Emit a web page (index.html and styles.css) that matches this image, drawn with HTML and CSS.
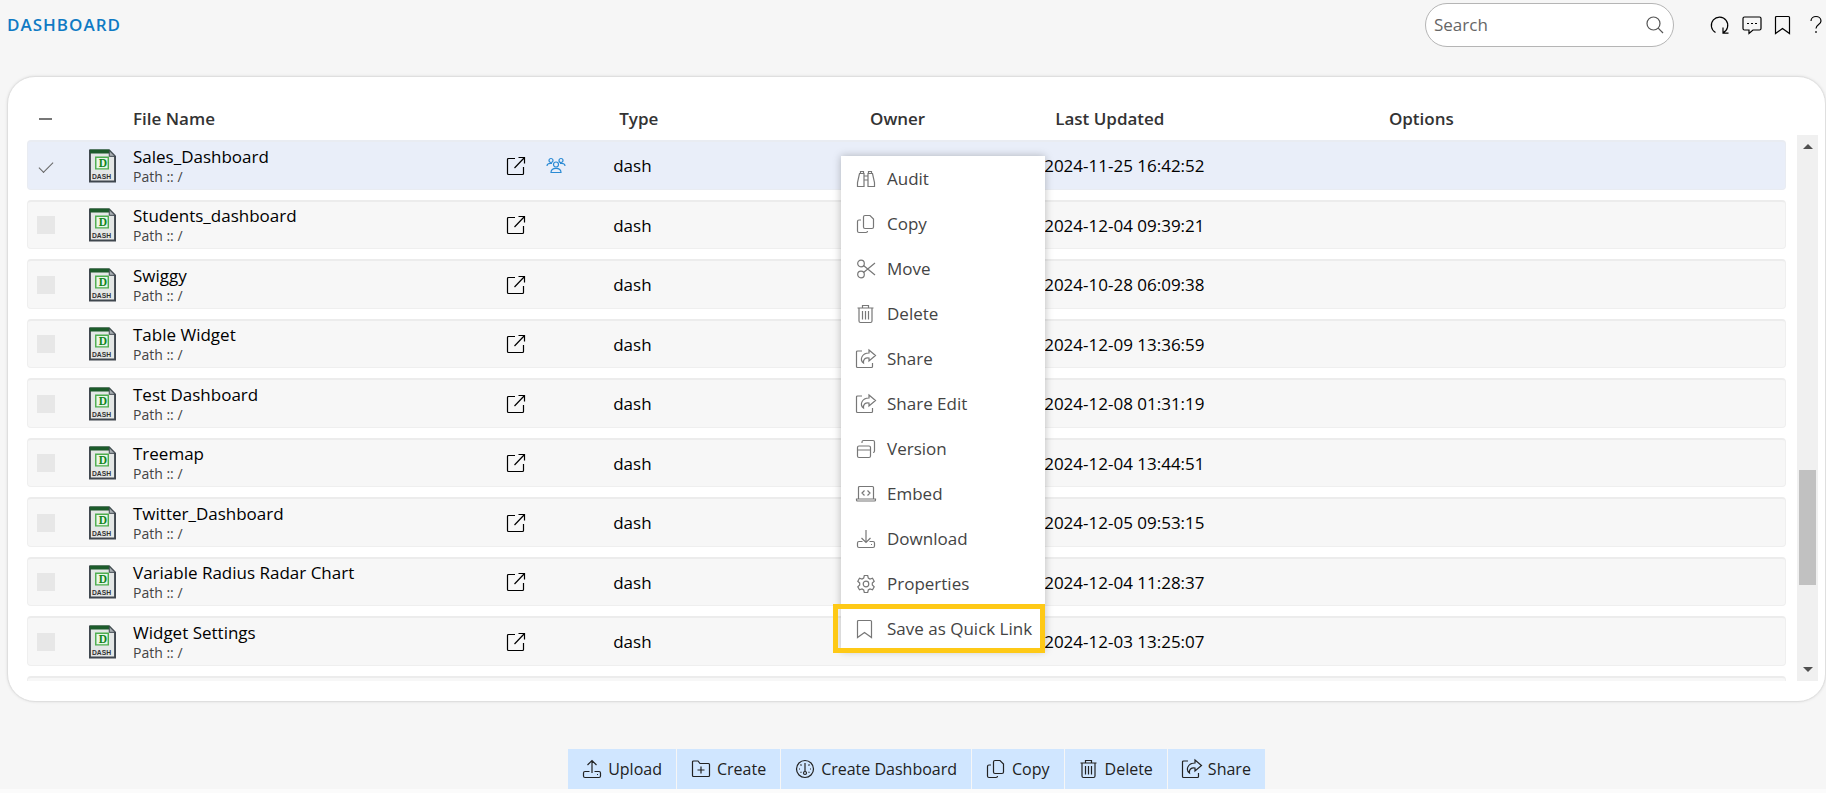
FILE: index.html
```
<!DOCTYPE html>
<html lang="en">
<head>
    <meta charset="UTF-8">
    <title>Dashboard</title>
    <link rel="stylesheet" href="styles.css">
</head>
<body>
<!-- Icon sprite -->
<svg class="sprite" aria-hidden="true">
    <symbol id="i-search" viewBox="0 0 20 20"><circle cx="8.5" cy="8.5" r="6.5"/><path d="M13.2 13.2 18 18"/></symbol>
    <symbol id="i-refresh" viewBox="0 0 20 20"><path d="M5.500 17.500A8.200 8.200 0 1 1 13 17.800M18.500 18.200H13V12.500"/></symbol>
    <symbol id="i-chat" viewBox="0 0 20 20"><path d="M2.500 2h15a1.500 1.500 0 0 1 1.500 1.500v10a1.500 1.500 0 0 1-1.500 1.500H11l-4 3.500V15H2.500A1.500 1.500 0 0 1 1 13.500v-10A1.500 1.500 0 0 1 2.500 2z"/><path d="M5 8.500h2M9 8.500h2M13 8.500h2"/></symbol>
    <symbol id="i-bookmark" viewBox="1 0 20 20"><path d="M3.500 1.500h12a1 1 0 0 1 1 1v16L9.500 13.500l-7 5v-16a1 1 0 0 1 1-1z"/></symbol>
    <symbol id="i-help" viewBox="0 0 20 20"><path d="M5 6c0-6 10-6 10 0 0 3.500-5 3.500-5 7.500M10 16v2"/></symbol>
    <symbol id="i-open" viewBox="0 0 20 20"><path d="M9 2.500H2.500a1 1 0 0 0-1 1v14a1 1 0 0 0 1 1h14a1 1 0 0 0 1-1V11M12.500 1.500h6v6M18.500 1.500 8.500 12"/></symbol>
    <symbol id="i-people" viewBox="0 0 20 20"><circle cx="5" cy="4.500" r="2"/><circle cx="15" cy="4.500" r="2"/><circle cx="10" cy="8.500" r="2.500"/><path d="M5 16.500c0-5.500 10-5.500 10 0zM1 10c0-2 2-3 5-2.500M19 10c0-2-2-3-5-2.500"/></symbol>
    <symbol id="i-audit" viewBox="0 0 20 20"><path d="M3.500 4.500h4.500v13H1.500v-4zM16.500 4.500H12v13h6.500v-4zM4.500 4.500v-2h3v2M15.500 4.500v-2h-3v2M8 7h4M8 11h4"/></symbol>
    <symbol id="i-copy" viewBox="0 0 20 20"><path d="M9 1.500h5l3.500 3.500v8a1.500 1.500 0 0 1-1.500 1.500H9A1.500 1.500 0 0 1 7.500 13V3A1.500 1.500 0 0 1 9 1.500zM5 6H3a1.500 1.500 0 0 0-1.500 1.500V17A1.500 1.500 0 0 0 3 18.500h7a1.500 1.500 0 0 0 1.500-1.500"/></symbol>
    <symbol id="i-cut" viewBox="0 0 20 20"><circle cx="5" cy="4.500" r="3.300"/><circle cx="5" cy="15.500" r="3.300"/><path d="M7.500 6.500 19 16M7.500 13.500 19 4"/></symbol>
    <symbol id="i-trash" viewBox="0 0 20 20"><path d="M1.500 4h16M6.500 4V1.500h6V4M3 4v13a1.500 1.500 0 0 0 1.500 1.500h10A1.500 1.500 0 0 0 16 17V4M6.500 7v8.500M9.500 7v8.500M12.500 7v8.500"/></symbol>
    <symbol id="i-share" viewBox="1 0 20 20"><path d="M7 2H2.500a1 1 0 0 0-1 1v14.500a1 1 0 0 0 1 1h14a1 1 0 0 0 1-1V14M14 1l6.500 5.500L14 12V9C10 8.500 8 10.500 8.500 14 4.500 11 6.500 4 14 4z"/></symbol>
    <symbol id="i-version" viewBox="0 0 20 20"><path d="M3 7h10a1.500 1.500 0 0 1 1.500 1.500V17a1.500 1.500 0 0 1-1.500 1.500H3A1.500 1.500 0 0 1 1.500 17V8.500A1.500 1.500 0 0 1 3 7zM1.500 11h13M6 4V3a1.500 1.500 0 0 1 1.500-1.500H17A1.500 1.500 0 0 1 18.500 3v9a1.500 1.500 0 0 1-1.500 1.500"/></symbol>
    <symbol id="i-embed" viewBox="0 0 20 20"><path d="M2.500 15V3.500a1 1 0 0 1 1-1h13a1 1 0 0 1 1 1V15M.5 15h19v1a1 1 0 0 1-1 1h-17a1 1 0 0 1-1-1zM8.500 6.500 6 9l2.500 2.500M11.500 6.500 14 9l-2.500 2.500"/></symbol>
    <symbol id="i-download" viewBox="0 0 20 20"><path d="M10 1v12M5.500 9l4.500 4.500L14.500 9M6.500 12.500H3a1.500 1.500 0 0 0-1.500 1.500v3A1.500 1.500 0 0 0 3 18.500h14a1.500 1.500 0 0 0 1.500-1.500v-3a1.500 1.500 0 0 0-1.500-1.500h-3.500M15 15.500h1"/></symbol>
    <symbol id="i-upload" viewBox="0 0 20 20"><path d="M10 14V1.500M5.500 6 10 1.500 14.500 6M7.500 12.500H3a1.500 1.500 0 0 0-1.500 1.500v3A1.500 1.500 0 0 0 3 18.500h14a1.500 1.500 0 0 0 1.500-1.500v-3a1.500 1.500 0 0 0-1.500-1.500h-4.500M15 15.500h1"/></symbol>
    <symbol id="i-gear" viewBox="0 0 20 20"><path d="M8.300 1.500h3.400l.6 2.600 1.700 1 2.500-.8 1.700 3-1.900 1.800v1.900l1.900 1.800-1.700 3-2.500-.8-1.700 1-.6 2.500H8.300L7.700 16 6 15l-2.500.8-1.700-3L3.700 11V9.100L1.800 7.300l1.700-3 2.500.8 1.700-1z"/><circle cx="10" cy="10" r="2.800"/></symbol>
    <symbol id="i-folder" viewBox="0 0 20 20"><path d="M2.500 2H7l2 2.500h8.500a1 1 0 0 1 1 1v11a1 1 0 0 1-1 1h-15a1 1 0 0 1-1-1V3a1 1 0 0 1 1-1zM10 7.500v7M6.500 11h7"/></symbol>
    <symbol id="i-gauge" viewBox="0 0 20 20"><circle cx="10" cy="10" r="8.500"/><circle cx="10" cy="14" r="1.500"/><path d="M10 4v8.500M4 10h1M15 10h1M5.500 5.500l1 1M14.500 5.500l-1 1M5.500 13.500l1-.5M14.500 13.500l-1-.5"/></symbol>
    <symbol id="i-file" viewBox="0 0 28 34">
        <path fill="#e4e7e6" stroke="#40474f" stroke-width="2" d="M1 1h20l6 6v26H1z"/>
        <path fill="#1d5c2b" d="M1 0h20l3 4H1z"/>
        <path fill="#a9afb3" stroke="#40474f" d="M21 1v6h6z"/>
        <path fill="#e9f7e9" stroke="#4fae50" stroke-width="1.500" d="M7 8h13v12H7z"/>
        <text x="10" y="18" font-family="Liberation Serif" font-size="12" font-weight="bold" fill="#12861c">D</text>
        <text x="3" y="30" font-family="Liberation Sans" font-size="7" font-weight="bold" fill="#333">DASH</text>
    </symbol>
</svg>

<header class="topbar">
    <h1 class="page-title">DASHBOARD</h1>
    <form class="search-box">
        <input type="text" placeholder="Search" aria-label="Search">
        <button type="button" aria-label="Run search"><svg class="icon"><use href="#i-search"/></svg></button>
    </form>
    <nav class="top-icons">
        <button type="button" aria-label="Refresh"><svg class="icon"><use href="#i-refresh"/></svg></button>
        <button type="button" aria-label="Messages"><svg class="icon"><use href="#i-chat"/></svg></button>
        <button type="button" aria-label="Quick links"><svg class="icon"><use href="#i-bookmark"/></svg></button>
        <button type="button" aria-label="Help"><svg class="icon"><use href="#i-help"/></svg></button>
    </nav>
</header>

<main class="file-panel">
    <div class="file-list">
        <table class="file-table">
            <colgroup>
                <col class="col-check"><col class="col-icon"><col class="col-name"><col class="col-links">
                <col class="col-type"><col class="col-owner"><col class="col-updated"><col>
            </colgroup>
            <thead>
                <tr>
                    <th><input type="checkbox" class="check check-all" aria-label="Select all"></th>
                    <th></th>
                    <th>File Name</th>
                    <th></th>
                    <th class="th-type">Type</th>
                    <th>Owner</th>
                    <th class="th-updated">Last Updated</th>
                    <th>Options</th>
                </tr>
            </thead>
            <tbody id="fileRows"></tbody>
        </table>
    </div>
    <div class="scrollbar">
        <span class="arrow arrow-up"></span>
        <div class="thumb"></div>
        <span class="arrow arrow-down"></span>
    </div>

    <!-- Row options menu -->
    <div class="options-menu">
        <button type="button"><svg class="icon"><use href="#i-audit"/></svg>Audit</button>
        <button type="button"><svg class="icon"><use href="#i-copy"/></svg>Copy</button>
        <button type="button"><svg class="icon"><use href="#i-cut"/></svg>Move</button>
        <button type="button"><svg class="icon"><use href="#i-trash"/></svg>Delete</button>
        <button type="button"><svg class="icon"><use href="#i-share"/></svg>Share</button>
        <button type="button"><svg class="icon"><use href="#i-share"/></svg>Share Edit</button>
        <button type="button"><svg class="icon"><use href="#i-version"/></svg>Version</button>
        <button type="button"><svg class="icon"><use href="#i-embed"/></svg>Embed</button>
        <button type="button"><svg class="icon"><use href="#i-download"/></svg>Download</button>
        <button type="button"><svg class="icon"><use href="#i-gear"/></svg>Properties</button>
        <button type="button" class="highlighted"><svg class="icon"><use href="#i-bookmark"/></svg>Save as Quick Link</button>
    </div>
</main>

<footer class="toolbar">
    <button type="button"><svg class="icon"><use href="#i-upload"/></svg>Upload</button>
    <button type="button"><svg class="icon"><use href="#i-folder"/></svg>Create</button>
    <button type="button"><svg class="icon"><use href="#i-gauge"/></svg>Create Dashboard</button>
    <button type="button"><svg class="icon"><use href="#i-copy"/></svg>Copy</button>
    <button type="button"><svg class="icon"><use href="#i-trash"/></svg>Delete</button>
    <button type="button"><svg class="icon"><use href="#i-share"/></svg>Share</button>
</footer>

<script src="script.js"></script>
</body>
</html>
```
FILE: styles.css
```
* {
    box-sizing: border-box;
}
html {
    background-color: #fbfbfb;
}
body {
    margin: 0;
    padding-left: 7px;
    background-color: #f6f6f6;
    font-family: "Open Sans", "Noto Sans", sans-serif;
    font-size: 17px;
    color: #000;
}
button {
    font: inherit;
    color: inherit;
    background: none;
    border: none;
    padding: 0;
    cursor: pointer;
}
.sprite {
    display: none;
}
.icon {
    width: 20px;
    height: 20px;
    flex: none;
    display: block;
    fill: none;
    stroke: currentColor;
    stroke-width: 1.2;
    overflow: visible;
}
.icon symbol,
symbol {
    overflow: visible;
}

/* Top bar */
.topbar {
    display: flex;
    align-items: center;
    height: 49px;
}
.page-title {
    margin: 0;
    flex: 1;
    font-size: 17px;
    font-weight: 600;
    letter-spacing: 1px;
    color: #0f7ac4;
}
.search-box {
    display: flex;
    align-items: center;
    width: 249px;
    height: 44px;
    padding: 0 8px;
    border: 1px solid #b5b5b5;
    border-radius: 22px;
    background-color: #fff;
    color: #555;
}
.search-box input {
    flex: 1;
    min-width: 0;
    padding: 0;
    border: none;
    outline: none;
    background: none;
    font: inherit;
}
.search-box input::placeholder {
    color: #666;
}
.top-icons {
    display: flex;
    gap: 12px;
    margin-left: 36px;
}

/* File list */
.file-panel {
    position: relative;
    display: flex;
    margin-top: 27px;
    padding: 0 7px 20px 19px;
    border: 1px solid #dfdfdf;
    border-radius: 28px;
    background-color: #fff;
    box-shadow: 0 0 3px rgba(0, 0, 0, 0.1);
}
.file-list {
    flex: 1;
    height: 604px;
    overflow: hidden;
}
.file-table {
    width: 100%;
    table-layout: fixed;
    border-collapse: separate;
    border-spacing: 0 10px;
}
.col-check { width: 62px; }
.col-icon { width: 44px; }
.col-name { width: 21.2%; }
.col-links { width: 6.1%; }
.col-type { width: 14.6%; }
.col-owner { width: 9.9%; }
.col-updated { width: 19.6%; }
.file-table th {
    height: 43px;
    padding: 20px 0 0;
    text-align: left;
    font-weight: 600;
    line-height: 22px;
    color: #333;
}
.file-table .th-type {
    padding-left: 6px;
}
.file-table .th-updated {
    padding-left: 11px;
}
.file-table td {
    height: 50px;
    padding: 0;
    background-color: #f7f7f7;
    border-top: 2px solid #ececec;
    border-bottom: 1px solid #efefef;
    white-space: nowrap;
}
.file-table tr:nth-child(even) td {
    height: 49px;
}
.file-table td:first-child {
    border-left: 1px solid #efefef;
    border-radius: 4px 0 0 4px;
}
.file-table td:last-child {
    border-right: 1px solid #efefef;
    border-radius: 0 4px 4px 0;
}
.file-table .selected td {
    background-color: #e9eef9;
    border-color: #e9ecf2;
}
.check {
    appearance: none;
    display: grid;
    place-items: center;
    width: 18px;
    height: 18px;
    margin: 0 0 0 9px;
    background-color: #e7e7e7;
}
.check-all,
.check:checked {
    background: none;
}
.check-all::before {
    content: "";
    width: 13px;
    height: 2px;
    background-color: #777;
}
.check:checked::before {
    content: "";
    width: 13px;
    height: 6px;
    border-left: 1px solid #666;
    border-bottom: 1px solid #666;
    transform: rotate(-45deg);
}
.file-icon {
    display: block;
    width: 27px;
    height: 34px;
}
.file-name {
    line-height: 22px;
}
.file-path {
    font-size: 14px;
    line-height: 18px;
    color: #444;
}
.links {
    display: flex;
    gap: 20px;
}
.links .shared {
    color: #2a8ad4;
}

/* Scrollbar */
.scrollbar {
    display: flex;
    flex-direction: column;
    align-items: center;
    width: 21px;
    margin: 58px 0 0 11px;
    padding: 9px 0;
    background-color: #f0f0f0;
}
.thumb {
    width: 17px;
    height: 115px;
    margin: auto 0 82px;
    background-color: #c1c1c1;
}
.arrow {
    border: 5px solid transparent;
}
.arrow-up {
    border-top: none;
    border-bottom-color: #505050;
}
.arrow-down {
    border-bottom: none;
    border-top-color: #505050;
}

/* Options menu */
.options-menu {
    position: absolute;
    left: 833px;
    top: 79px;
    width: 204px;
    background-color: #fff;
    color: #444;
    box-shadow: 0 0 8px rgba(0, 0, 0, 0.25);
}
.options-menu button {
    display: flex;
    align-items: center;
    gap: 11px;
    width: 100%;
    height: 45px;
    padding-left: 15px;
    white-space: nowrap;
}
.options-menu .icon {
    color: #777;
}
.options-menu .highlighted {
    position: relative;
}
.options-menu .highlighted::after {
    content: "";
    position: absolute;
    inset: -2px 0 -2px -8px;
    border: 5px solid #fec916;
}

/* Bottom toolbar */
.toolbar {
    display: flex;
    justify-content: center;
    gap: 1px;
    margin-top: 47px;
    font-size: 16px;
}
.toolbar button {
    display: flex;
    align-items: center;
    gap: 6px;
    height: 40px;
    padding: 0 14px;
    background-color: #d0e6ff;
    color: #222;
}
```
FILE: script.js
```
const files = [
    { name: 'Sales_Dashboard', updated: '2024-11-25 16:42:52', selected: true, shared: true },
    { name: 'Students_dashboard', updated: '2024-12-04 09:39:21' },
    { name: 'Swiggy', updated: '2024-10-28 06:09:38' },
    { name: 'Table Widget', updated: '2024-12-09 13:36:59' },
    { name: 'Test Dashboard', updated: '2024-12-08 01:31:19' },
    { name: 'Treemap', updated: '2024-12-04 13:44:51' },
    { name: 'Twitter_Dashboard', updated: '2024-12-05 09:53:15' },
    { name: 'Variable Radius Radar Chart', updated: '2024-12-04 11:28:37' },
    { name: 'Widget Settings', updated: '2024-12-03 13:25:07' }
];

// Build one table row for each file
const rows = files.map(file => `
    <tr class="${file.selected ? 'selected' : ''}">
        <td><input type="checkbox" class="check" aria-label="Select ${file.name}" ${file.selected ? 'checked' : ''}></td>
        <td><svg class="file-icon"><use href="#i-file"/></svg></td>
        <td>
            <div class="file-name">${file.name}</div>
            <div class="file-path">Path :: /</div>
        </td>
        <td>
            <div class="links">
                <button type="button" aria-label="Open in new tab"><svg class="icon"><use href="#i-open"/></svg></button>
                ${file.shared ? '<button type="button" class="shared" aria-label="Shared"><svg class="icon"><use href="#i-people"/></svg></button>' : ''}
            </div>
        </td>
        <td>dash</td>
        <td></td>
        <td>${file.updated}</td>
        <td></td>
    </tr>`);

// Next row, cut off by the end of the list
rows.push('<tr>' + '<td></td>'.repeat(8) + '</tr>');

document.getElementById('fileRows').innerHTML = rows.join('');
```
